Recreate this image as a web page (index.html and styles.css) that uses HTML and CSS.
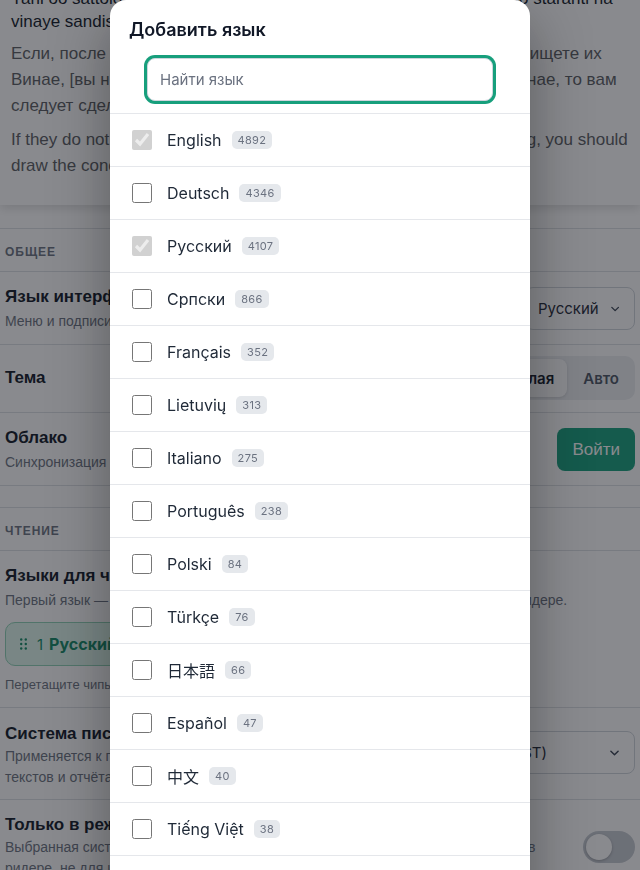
FILE: index.html
```html
<!DOCTYPE html>
<html lang="ru">
<head>
<meta charset="utf-8">
<title>Настройки</title>
<link rel="stylesheet" href="styles.css">
</head>
<body class="modal-open">
<main class="page">
  <section class="preview">
    <p class="original">Yanl oo sattolo menaraki ini, vada eso lumeni kasaro ulo teri mo sato staranti na<br>vinaye sandisa oro.</p>
    <p>Если, после того, как вы внимательно перечитали эти строки, вы ищете их<br>Винае, [вы не сможете найти их] в большом словаре на языке винае, то вам<br>следует сделать перевод самостоятельно.</p>
    <p>If they do not appear in the Vinae dictionary even after careful reading, you should<br>draw the conclusions yourself.</p>
  </section>

  <section class="group">
    <h2 class="group-title">Общее</h2>
    <div class="row">
      <div class="row-text">
        <h3 class="row-title">Язык интерфейса</h3>
        <p class="row-sub">Меню и подписи приложения</p>
      </div>
      <button class="select select-ui">Русский
        <svg class="chev" viewBox="0 0 10 6" width="10" height="6"><path d="M1 1l4 4 4-4" fill="none" stroke="currentColor" stroke-width="1.6" stroke-linecap="round" stroke-linejoin="round"/></svg>
      </button>
    </div>
    <div class="row row-control">
      <h3 class="row-title">Тема</h3>
      <div class="segmented">
        <button class="seg">Тёмная</button>
        <button class="seg active">Светлая</button>
        <button class="seg">Авто</button>
      </div>
    </div>
    <div class="row">
      <div class="row-text">
        <h3 class="row-title">Облако</h3>
        <p class="row-sub">Синхронизация прогресса</p>
      </div>
      <button class="btn-primary">Войти</button>
    </div>
  </section>

  <section class="group">
    <h2 class="group-title">Чтение</h2>
    <div class="row row-block">
      <h3 class="row-title">Языки для чтения</h3>
      <p class="row-sub">Первый язык — основной, остальные используются как запасные варианты в ридере.</p>
      <div class="chips">
        <span class="chip">
          <svg class="grip" viewBox="0 0 7 12" width="7" height="12"><circle cx="1.2" cy="1.5" r="1.2"/><circle cx="5.8" cy="1.5" r="1.2"/><circle cx="1.2" cy="6" r="1.2"/><circle cx="5.8" cy="6" r="1.2"/><circle cx="1.2" cy="10.5" r="1.2"/><circle cx="5.8" cy="10.5" r="1.2"/></svg>
          <span class="chip-num">1</span>
          <span class="chip-name">Русский</span>
        </span>
      </div>
      <p class="row-hint">Перетащите чипы, чтобы изменить порядок.</p>
    </div>
    <div class="row row-script">
      <div class="row-text">
        <h3 class="row-title">Система письма</h3>
        <p class="row-sub row-sub-wide">Применяется к переводам, транслитерации<br>текстов и отчётам о прочитанном.</p>
      </div>
      <button class="select select-script">Латиница (ISO/GOST)
        <svg class="chev" viewBox="0 0 10 6" width="10" height="6"><path d="M1 1l4 4 4-4" fill="none" stroke="currentColor" stroke-width="1.6" stroke-linecap="round" stroke-linejoin="round"/></svg>
      </button>
    </div>
    <div class="row row-toggle">
      <div class="row-text">
        <h3 class="row-title">Только в режиме чтения</h3>
        <p class="row-sub row-sub-wide">Выбранная система письма будет применяться к текстам и к переводам только в<br>ридере, не для интерфейса.</p>
      </div>
      <span class="toggle"><span class="knob"></span></span>
    </div>
  </section>
</main>

<div class="overlay">
  <div class="modal" role="dialog" aria-label="Добавить язык">
    <div class="modal-head">
      <h2 class="modal-title">Добавить язык</h2>
      <input class="search" type="text" placeholder="Найти язык">
    </div>
    <ul class="lang-list">
      <li class="lang-row"><input type="checkbox" checked disabled><span class="lang-name">English</span><span class="count">4892</span></li>
      <li class="lang-row"><input type="checkbox"><span class="lang-name">Deutsch</span><span class="count">4346</span></li>
      <li class="lang-row"><input type="checkbox" checked disabled><span class="lang-name">Русский</span><span class="count">4107</span></li>
      <li class="lang-row"><input type="checkbox"><span class="lang-name">Српски</span><span class="count">866</span></li>
      <li class="lang-row"><input type="checkbox"><span class="lang-name">Français</span><span class="count">352</span></li>
      <li class="lang-row"><input type="checkbox"><span class="lang-name">Lietuvių</span><span class="count">313</span></li>
      <li class="lang-row"><input type="checkbox"><span class="lang-name">Italiano</span><span class="count">275</span></li>
      <li class="lang-row"><input type="checkbox"><span class="lang-name">Português</span><span class="count">238</span></li>
      <li class="lang-row"><input type="checkbox"><span class="lang-name">Polski</span><span class="count">84</span></li>
      <li class="lang-row"><input type="checkbox"><span class="lang-name">Türkçe</span><span class="count">76</span></li>
      <li class="lang-row"><input type="checkbox"><span class="lang-name" lang="ja">日本語</span><span class="count">66</span></li>
      <li class="lang-row"><input type="checkbox"><span class="lang-name">Español</span><span class="count">47</span></li>
      <li class="lang-row"><input type="checkbox"><span class="lang-name" lang="zh">中文</span><span class="count">40</span></li>
      <li class="lang-row"><input type="checkbox"><span class="lang-name">Tiếng Việt</span><span class="count">38</span></li>
      <li class="lang-row"><input type="checkbox"><span class="lang-name">Nederlands</span><span class="count">31</span></li>
      <li class="lang-row"><input type="checkbox"><span class="lang-name" lang="ko">한국어</span><span class="count">22</span></li>
    </ul>
  </div>
</div>
</body>
</html>
```

FILE: styles.css
```css
* { box-sizing: border-box; }

html, body { margin: 0; }

body {
  font-family: "Liberation Sans", Arial, sans-serif;
  color: #111827;
  background: #fff;
}

/* scroll lock while the dialog is open */
body.modal-open { overflow: hidden; height: 100vh; }

button { font: inherit; cursor: pointer; }

/* ---------- reader preview (shows the latest lines) ---------- */
.preview {
  height: 205px;
  display: flex;
  flex-direction: column;
  justify-content: flex-end;
  overflow: hidden;
  padding: 0 8px 26px 11px;
  background: #fff;
  box-shadow: 0 3px 10px rgba(0, 0, 0, 0.14);
  position: relative;
  z-index: 1;
}

.preview p {
  margin: 0 0 8px;
  font-size: 17px;
  line-height: 26px;
  color: #5a5d62;
  white-space: nowrap;
}
.preview p:last-child { margin-bottom: 0; }
.preview .original { color: #111827; line-height: 23px; }

/* ---------- settings groups ---------- */
.group { margin-top: 23px; }
.group + .group { margin-top: 21px; }

.group-title {
  margin: 0;
  padding: 16px 5px 12px;
  font-size: 12px;
  line-height: 14px;
  font-weight: 700;
  letter-spacing: 0.08em;
  text-transform: uppercase;
  color: #6b7280;
  border-top: 1px solid #dde0e4;
  border-bottom: 1px solid #dde0e4;
}

.row {
  display: flex;
  align-items: center;
  justify-content: space-between;
  gap: 12px;
  padding: 14px 5px 13px;
  border-bottom: 1px solid #dde0e4;
}
.row-control { padding: 11px 5px 12px; }
.row-block { display: block; }
.row-script { padding: 15px 5px 11px; align-items: flex-start; }
.row-script .select { margin-top: 8px; }
.row-toggle { padding: 14px 5px 10px; }

.row-text { min-width: 0; }

.row-title {
  margin: 0;
  font-size: 17px;
  line-height: 22px;
  font-weight: 700;
  color: #111827;
}

.row-sub {
  margin: 3px 0 0;
  font-size: 14px;
  line-height: 20px;
  color: #6b7280;
}
.row-sub-wide { line-height: 21px; margin-top: 1px; white-space: nowrap; }

.row-hint {
  margin: 10px 0 0;
  font-size: 13px;
  line-height: 18px;
  color: #6b7280;
}

/* select-like buttons */
.select {
  display: flex;
  align-items: center;
  justify-content: space-between;
  gap: 12px;
  height: 43px;
  padding: 0 15px 0 12px;
  border: 1px solid #cfd4da;
  border-radius: 8px;
  background: #fff;
  color: #1f2937;
  font-family: Inter, sans-serif;
  font-size: 15px;
  flex-shrink: 0;
}
.select-ui { width: 110px; }
.select-script { width: 259px; }
.chev { width: 9px; height: 6px; color: #374151; }

/* theme switcher */
.segmented {
  display: flex;
  gap: 3px;
  padding: 3px;
  background: #eceef1;
  border-radius: 10px;
  flex-shrink: 0;
}
.seg {
  border: 0;
  background: none;
  padding: 0 13px;
  height: 38px;
  border-radius: 8px;
  font-family: Inter, sans-serif;
  font-size: 15px;
  font-weight: 600;
  color: #4b5563;
}
.seg.active {
  background: #fff;
  color: #111827;
  box-shadow: 0 1px 3px rgba(0, 0, 0, 0.12);
}

.btn-primary {
  height: 43px;
  padding: 0 15px;
  border: 0;
  border-radius: 8px;
  background: #16a07c;
  color: #fff;
  font-size: 17px;
  flex-shrink: 0;
}

/* reading language chips */
.chips { display: flex; gap: 8px; margin-top: 12px; }
.chip {
  display: inline-flex;
  align-items: center;
  height: 44px;
  padding: 0 18px 0 14px;
  border: 1px solid #8fd3b6;
  border-radius: 10px;
  background: #def7ec;
  color: #138a66;
  font-family: Inter, sans-serif;
  font-size: 16px;
}
.grip { fill: currentColor; margin-right: 10px; }
.chip-num { margin-right: 6px; font-size: 15px; }
.chip-name { font-weight: 700; margin-right: 60px; }

/* switch */
.toggle {
  position: relative;
  width: 52px;
  height: 32px;
  border-radius: 16px;
  background: #c5cad1;
  flex-shrink: 0;
}
.knob {
  position: absolute;
  left: 3px;
  top: 3px;
  width: 26px;
  height: 26px;
  border-radius: 50%;
  background: #fff;
  box-shadow: 0 1px 3px rgba(0, 0, 0, 0.25);
}

/* ---------- add language dialog ---------- */
.overlay {
  position: fixed;
  inset: 0;
  z-index: 10;
  display: flex;
  justify-content: center;
  align-items: flex-start;
  overflow: hidden;
  background: rgba(20, 22, 30, 0.5);
}

.modal {
  flex-shrink: 0;
  width: 420px;
  background: #fff;
  border-radius: 16px;
  box-shadow: 0 20px 60px rgba(0, 0, 0, 0.35);
  font-family: Inter, "Noto Sans CJK JP", sans-serif;
}

.modal-head { padding: 18px 19px 12px; }

.modal-title {
  margin: 0;
  font-size: 18px;
  line-height: 24px;
  font-weight: 600;
  color: #111827;
}

.search {
  display: block;
  width: 346px;
  height: 43px;
  margin: 16px auto 0;
  padding: 0 12px;
  border: 1px solid #cfd5dd;
  border-radius: 8px;
  outline: none;
  box-shadow: 0 0 0 3px #179f7c;
  font-family: Inter, sans-serif;
  font-size: 15px;
  color: #111827;
}
.search::placeholder { color: #6b7280; }

.lang-list {
  list-style: none;
  margin: 0;
  padding: 0;
  border-top: 1px solid #e5e7eb;
}

.lang-row {
  display: flex;
  align-items: center;
  height: 53px;
  padding: 0 22px;
  border-bottom: 1px solid #e5e7eb;
}
.lang-row input { width: 20px; height: 20px; margin: 0; flex-shrink: 0; }

.lang-name {
  margin-left: 15px;
  font-size: 16px;
  color: #1f2937;
}
.lang-name:lang(zh) { font-family: Inter, "Noto Sans CJK SC", sans-serif; }
.lang-name:lang(ko) { font-family: Inter, "Noto Sans CJK KR", sans-serif; }

.count {
  margin-left: 10px;
  padding: 0 6px;
  border-radius: 5px;
  background: #e5e8ec;
  color: #6b7280;
  font-size: 11px;
  line-height: 18px;
  letter-spacing: 0.03em;
}
```
